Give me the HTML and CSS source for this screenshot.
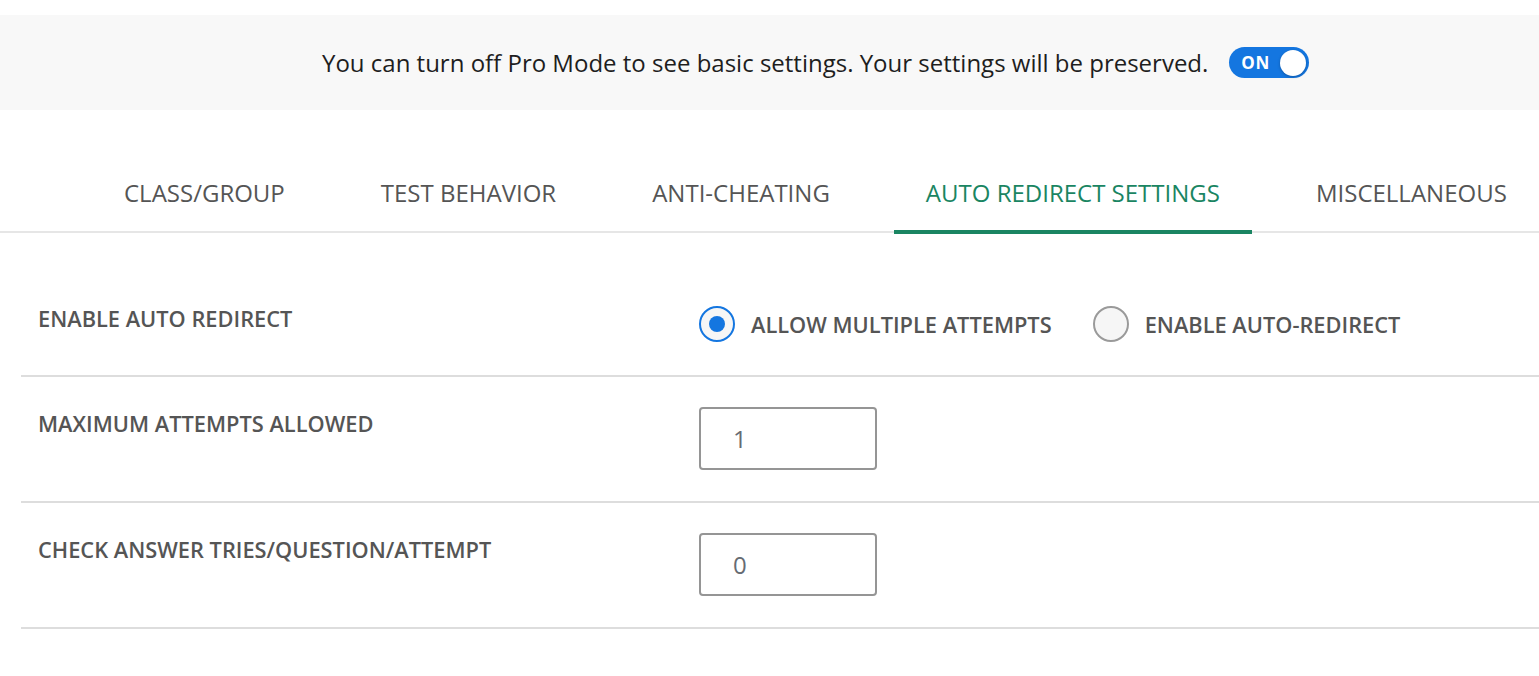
FILE: index.html
```html
<!DOCTYPE html>
<html lang="en">
<head>
    <meta charset="UTF-8">
    <meta name="viewport" content="width=device-width, initial-scale=1.0">
    <title>Test Settings</title>
    <link rel="stylesheet" href="styles.css">
</head>
<body>
    <div class="pro-banner">
        <span class="pro-text">You can turn off Pro Mode to see basic settings. Your settings will be preserved.</span>
        <span class="switch">
            <span class="switch-label">ON</span>
            <span class="switch-knob"></span>
        </span>
    </div>

    <div class="tabs">
        <div class="tab">CLASS/GROUP</div>
        <div class="tab">TEST BEHAVIOR</div>
        <div class="tab">ANTI-CHEATING</div>
        <div class="tab active">AUTO REDIRECT SETTINGS</div>
        <div class="tab">MISCELLANEOUS</div>
    </div>

    <div class="settings">
        <div class="setting-row first">
            <div class="setting-label">ENABLE AUTO REDIRECT</div>
            <div class="radio-group">
                <label class="radio-option">
                    <span class="radio checked"></span>
                    <span class="radio-text">ALLOW MULTIPLE ATTEMPTS</span>
                </label>
                <label class="radio-option">
                    <span class="radio"></span>
                    <span class="radio-text">ENABLE AUTO-REDIRECT</span>
                </label>
            </div>
        </div>
        <div class="setting-row">
            <div class="setting-label">MAXIMUM ATTEMPTS ALLOWED</div>
            <input class="number-input" type="text" value="1">
        </div>
        <div class="setting-row">
            <div class="setting-label">CHECK ANSWER TRIES/QUESTION/ATTEMPT</div>
            <input class="number-input" type="text" value="0">
        </div>
    </div>
</body>
</html>
```

FILE: styles.css
```css
:root {
    --text-color: #555555;
    --accent-green: #1a8562;
    --accent-blue: #1476e0;
    --line-color: #dddddd;
}
body {
    margin: 0;
    font-family: 'Open Sans', 'Noto Sans', sans-serif;
    color: var(--text-color);
    background: #ffffff;
}
.pro-banner {
    margin-top: 15px;
    height: 95px;
    background: #f8f8f8;
    display: flex;
    align-items: center;
    padding-left: 322px;
    gap: 21px;
}
.pro-text {
    font-size: 24px;
    color: #1e1e1e;
}
.switch {
    width: 80px;
    height: 31px;
    border-radius: 16px;
    background: var(--accent-blue);
    display: flex;
    align-items: center;
    justify-content: space-between;
    padding: 0 3px 0 12px;
    box-sizing: border-box;
}
.switch-label {
    color: #ffffff;
    font-size: 17px;
    font-weight: 700;
    letter-spacing: 0.5px;
}
.switch-knob {
    width: 26px;
    height: 26px;
    border-radius: 50%;
    background: #ffffff;
    box-shadow: 0 1px 3px rgba(0, 0, 0, 0.25);
}
.tabs {
    margin-top: 40px;
    display: flex;
    gap: 32px;
    padding-left: 92px;
    border-bottom: 2px solid #e6e6e6;
}
.tab {
    padding: 27px 32px 21px;
    font-size: 24px;
    line-height: 32px;
    color: #555555;
    border-bottom: 4px solid transparent;
    margin-bottom: -3px;
    white-space: nowrap;
}
.tab.active {
    color: var(--accent-green);
    border-bottom-color: var(--accent-green);
}
.settings {
    margin-left: 21px;
}
.setting-row {
    display: grid;
    grid-template-columns: 661px 1fr;
    align-items: start;
    padding: 30px 0 31px 17px;
    border-bottom: 2px solid var(--line-color);
}
.setting-row.first {
    padding-top: 73px;
    padding-bottom: 33px;
}
.setting-label {
    font-size: 21.8px;
    font-weight: 600;
    line-height: 30px;
    margin-top: 2px;
}
.setting-row.first .setting-label {
    margin-top: -2px;
}
.radio-group {
    display: flex;
    gap: 41px;
}
.radio-option {
    display: flex;
    align-items: center;
    gap: 16px;
}
.radio {
    width: 36px;
    height: 36px;
    border-radius: 50%;
    border: 2px solid #9a9a9a;
    background: #f6f6f6;
    box-sizing: border-box;
    display: flex;
    align-items: center;
    justify-content: center;
}
.radio.checked {
    border-color: var(--accent-blue);
}
.radio.checked::after {
    content: "";
    width: 16px;
    height: 16px;
    border-radius: 50%;
    background: var(--accent-blue);
}
.radio-text {
    font-size: 21.8px;
    font-weight: 600;
    color: #555555;
}
.number-input {
    width: 178px;
    height: 63px;
    box-sizing: border-box;
    border: 2px solid #959595;
    border-radius: 4px;
    padding: 0 0 0 32px;
    font-family: 'Open Sans', sans-serif;
    font-size: 24px;
    color: #666b73;
    outline: none;
}
```
